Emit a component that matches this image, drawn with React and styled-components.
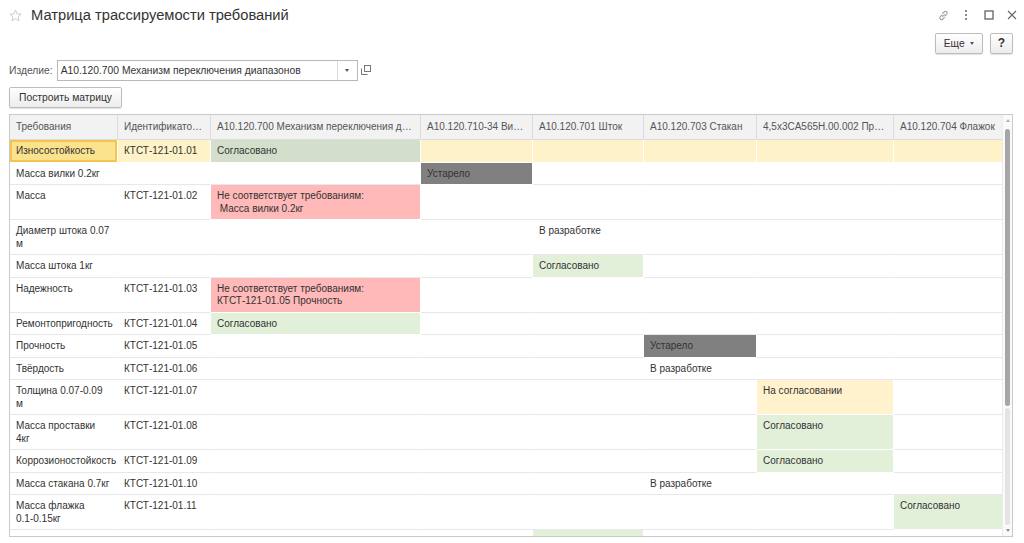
import React from "react";
import styled, { createGlobalStyle } from "styled-components";

const GlobalStyle = createGlobalStyle`
  html, body {
    margin: 0;
    padding: 0;
    background: #fff;
  }
  body {
    font-family: "Liberation Sans", Arial, sans-serif;
    font-size: 10.3px;
    color: #333;
  }
`;

const Page = styled.div`
  width: 1024px;
  height: 543px;
  overflow: hidden;
  box-sizing: border-box;
  padding: 0 11px 0 9px;
  display: flex;
  flex-direction: column;
`;

const TitleBar = styled.div`
  display: flex;
  align-items: center;
  height: 30px;
`;

const Title = styled.h1`
  margin: 0 0 0 9px;
  font-size: 14.7px;
  font-weight: 400;
  color: #333;
  flex: 1;
`;

const WindowIcons = styled.div`
  display: flex;
  align-items: center;
  gap: 9px;
  margin-right: -6px;
`;

const IconBox = styled.span`
  width: 14px;
  height: 14px;
  display: flex;
  align-items: center;
  justify-content: center;
`;

const CommandBar = styled.div`
  display: flex;
  justify-content: flex-end;
  gap: 7px;
  height: 22px;
  align-items: center;
  margin-top: 2px;
`;

const Button = styled.button`
  font-family: inherit;
  font-size: ${(p) => (p.$bold ? "12px" : "10.3px")};
  font-weight: ${(p) => (p.$bold ? 700 : 400)};
  color: #333;
  height: 21px;
  padding: 0 ${(p) => p.$pad || 8}px;
  border: 1px solid #bdbdbd;
  border-radius: 2px;
  background: linear-gradient(#ffffff, #ececec);
  box-shadow: 0 1px 1px rgba(0, 0, 0, 0.12);
  display: flex;
  align-items: center;
  gap: 5px;
  cursor: pointer;
`;

const Caret = styled.span`
  width: 0;
  height: 0;
  border-left: 2.5px solid transparent;
  border-right: 2.5px solid transparent;
  border-top: 3px solid #555;
`;

const FieldRow = styled.div`
  display: flex;
  align-items: center;
  margin-top: 5px;
  height: 22px;
`;

const Label = styled.span`
  color: #555;
  margin-right: 4px;
`;

const Input = styled.div`
  display: flex;
  align-items: stretch;
  width: 299px;
  height: 19px;
  border: 1px solid #b8b8b8;
  background: #fff;
`;

const InputText = styled.div`
  flex: 1;
  padding: 0 3px;
  line-height: 19px;
  color: #333;
  white-space: nowrap;
  overflow: hidden;
`;

const DropPart = styled.div`
  width: 19px;
  border-left: 1px solid #dcdcdc;
  display: flex;
  align-items: center;
  justify-content: center;
`;

const OpenButton = styled.div`
  width: 17px;
  height: 21px;
  display: flex;
  align-items: center;
  justify-content: center;
`;

const ActionRow = styled.div`
  margin-top: 6px;
  height: 22px;
  display: flex;
`;

const Frame = styled.div`
  margin-top: 5px;
  height: 423px;
  box-sizing: border-box;
  border: 1px solid #c9c9c9;
  display: flex;
  overflow: hidden;
`;

const GridArea = styled.div`
  flex: 1;
  overflow: hidden;
`;

const cols = "108px 93px 210px 112px 111px 113px 137px 109px";

const HeaderRow = styled.div`
  display: grid;
  grid-template-columns: ${cols};
  height: 24px;
  background: #f2f2f2;
  border-bottom: 1px solid #dcdcdc;
`;

const HeadCell = styled.div`
  padding: 0 6px;
  line-height: 24px;
  font-size: 10px;
  color: #555;
  white-space: nowrap;
  overflow: hidden;
  text-overflow: ellipsis;
  border-right: 1px solid #dcdcdc;
`;

const Row = styled.div`
  display: grid;
  grid-template-columns: ${cols};
  background: ${(p) => (p.$selected ? "#fdf2c8" : "#fff")};
`;

const bg = {
  ok: "#e2efd9",
  okSel: "#d3dfcb",
  bad: "#ffb9b9",
  old: "#808080",
  wait: "#fff2cc",
};

const Cell = styled.div`
  box-sizing: border-box;
  padding: 5px 6px 4px;
  font-size: 10px;
  line-height: 12.5px;
  overflow: hidden;
  white-space: ${(p) => (p.$nowrap ? "nowrap" : "pre-wrap")};
  color: #333;
  background: ${(p) => (p.$status ? bg[p.$status] : "transparent")};
  border-right: 1px solid ${(p) => (p.$status ? "#fff" : "transparent")};
  border-bottom: 1px solid ${(p) => (p.$status ? "#fff" : "#e8e8e8")};
  ${(p) =>
    p.$current &&
    `
    background: #fbe28d;
    box-shadow: inset 0 0 0 2px #f4c44e;
  `}
  ${(p) => p.$selected && `border-right: 1px solid #fff; border-bottom: 1px solid #fff;`}
`;

const Keep = styled.span`
  white-space: nowrap;
`;

const ScrollTrack = styled.div`
  width: 10px;
  border-left: 1px solid #ececec;
  background: #fafafa;
  display: flex;
  flex-direction: column;
  align-items: center;
  padding: 4px 0;
  box-sizing: border-box;
`;

const ScrollThumb = styled.div`
  width: 5px;
  height: 277px;
  margin-top: 7px;
  border-radius: 3px;
  background: #a6a6a6;
`;

const ScrollRest = styled.div`
  flex: 1;
  width: 5px;
  border-radius: 3px;
  background: #e4e4e4;
  margin: 2px 0 4px;
`;

const Arrow = styled.span`
  width: 0;
  height: 0;
  border-left: 2px solid transparent;
  border-right: 2px solid transparent;
  ${(p) => (p.$up ? "border-bottom: 3px solid #b0b0b0;" : "border-top: 3px solid #909090;")}
`;

const headers = [
  "Требования",
  "Идентификатор требования",
  "A10.120.700 Механизм переключения диапазонов",
  "A10.120.710-34 Вилка",
  "A10.120.701 Шток",
  "A10.120.703 Стакан",
  "4,5x3CA565H.00.002 Проставка",
  "A10.120.704 Флажок",
];

// cells: [column index, text, status]
const rows = [
  { key: "r1", name: "Износостойкость", id: "КТСТ-121-01.01", cells: [[2, "Согласовано", "okSel"]], selected: true },
  { key: "r2", name: "Масса вилки 0.2кг", id: "", cells: [[3, "Устарело", "old"]] },
  { key: "r3", name: "Масса", id: "КТСТ-121-01.02", cells: [[2, "Не соответствует требованиям:\n Масса вилки 0.2кг", "bad"]] },
  { key: "r4", name: "Диаметр штока 0.07 м", id: "", cells: [[4, "В разработке", null]] },
  { key: "r5", name: "Масса штока 1кг", id: "", cells: [[4, "Согласовано", "ok"]] },
  { key: "r6", name: "Надежность", id: "КТСТ-121-01.03", cells: [[2, "Не соответствует требованиям:\nКТСТ-121-01.05 Прочность", "bad"]] },
  { key: "r7", name: "Ремонтопригодность", id: "КТСТ-121-01.04", cells: [[2, "Согласовано", "ok"]] },
  { key: "r8", name: "Прочность", id: "КТСТ-121-01.05", cells: [[5, "Устарело", "old"]] },
  { key: "r9", name: "Твёрдость", id: "КТСТ-121-01.06", cells: [[5, "В разработке", null]] },
  {
    key: "r10",
    name: (
      <>
        Толщина <Keep>0.07-0.09</Keep> м
      </>
    ),
    id: "КТСТ-121-01.07",
    cells: [[6, "На согласовании", "wait"]],
  },
  { key: "r11", name: "Масса проставки 4кг", id: "КТСТ-121-01.08", cells: [[6, "Согласовано", "ok"]] },
  { key: "r12", name: "Коррозионостойкость", id: "КТСТ-121-01.09", cells: [[6, "Согласовано", "ok"]] },
  { key: "r13", name: "Масса стакана 0.7кг", id: "КТСТ-121-01.10", cells: [[5, "В разработке", null]] },
  {
    key: "r14",
    name: (
      <>
        Масса флажка <Keep>0.1-0.15кг</Keep>
      </>
    ),
    id: "КТСТ-121-01.11",
    cells: [[7, "Согласовано", "ok"]],
  },
  { key: "r15", name: "Плотность", id: "КТСТ-121-01.12", cells: [[4, "Согласовано", "ok"]] },
];

const Star = () => (
  <svg width="13" height="13" viewBox="0 0 24 24" fill="none" stroke="#c4c4c4" strokeWidth="1.6" strokeLinejoin="round">
    <polygon points="12,2 15,9 22.5,9.5 16.8,14.3 18.6,21.8 12,17.8 5.4,21.8 7.2,14.3 1.5,9.5 9,9" />
  </svg>
);

const LinkIcon = () => (
  <svg width="13" height="13" viewBox="0 0 16 16" fill="none" stroke="#9a9a9a" strokeWidth="1.3" strokeLinecap="round">
    <path d="M7 9.2 L9.2 7" />
    <path d="M6 7.5 L4 9.5 a2.2 2.2 0 0 0 3.1 3.1 L9 10.6" />
    <path d="M10 8.5 L12 6.5 a2.2 2.2 0 0 0 -3.1 -3.1 L7 5.4" />
  </svg>
);

const Dots = () => (
  <svg width="4" height="12" viewBox="0 0 4 12" fill="#8a8a8a">
    <rect x="1" y="1" width="2" height="2" />
    <rect x="1" y="5" width="2" height="2" />
    <rect x="1" y="9" width="2" height="2" />
  </svg>
);

const Maximize = () => (
  <svg width="10" height="10" viewBox="0 0 10 10" fill="none" stroke="#555" strokeWidth="1.2">
    <rect x="1" y="1" width="8" height="8" />
  </svg>
);

const Close = () => (
  <svg width="10" height="10" viewBox="0 0 10 10" fill="none" stroke="#666" strokeWidth="1.1">
    <path d="M1 1 L9 9 M9 1 L1 9" />
  </svg>
);

const OpenIcon = () => (
  <svg width="10" height="10" viewBox="0 0 10 10" fill="none" stroke="#777" strokeWidth="1">
    <rect x="3.5" y="0.5" width="6" height="6" />
    <path d="M0.5 3.5 V9.5 H6.5" />
  </svg>
);

const Matrix = () => (
  <Frame>
    <GridArea>
      <HeaderRow>
        {headers.map((h) => (
          <HeadCell key={h}>{h}</HeadCell>
        ))}
      </HeaderRow>
      {rows.map((r) => {
        const byCol = {};
        r.cells.forEach(([c, text, status]) => (byCol[c] = { text, status }));
        const all = [];
        for (let c = 0; c < 8; c++) {
          if (c === 0) {
            all.push(
              <Cell key={c} $current={r.selected} $selected={r.selected}>
                {r.name}
              </Cell>
            );
          } else if (c === 1) {
            all.push(
              <Cell key={c} $nowrap $selected={r.selected}>
                {r.id}
              </Cell>
            );
          } else {
            const v = byCol[c];
            all.push(
              <Cell key={c} $status={v && v.status} $selected={r.selected}>
                {v ? v.text : ""}
              </Cell>
            );
          }
        }
        return (
          <Row key={r.key} $selected={r.selected}>
            {all}
          </Row>
        );
      })}
    </GridArea>
    <ScrollTrack>
      <Arrow $up />
      <ScrollThumb />
      <ScrollRest />
      <Arrow />
    </ScrollTrack>
  </Frame>
);

export default function App() {
  return (
    <>
      <GlobalStyle />
      <Page>
        <TitleBar>
          <Star />
          <Title>Матрица трассируемости требований</Title>
          <WindowIcons>
            <IconBox>
              <LinkIcon />
            </IconBox>
            <IconBox>
              <Dots />
            </IconBox>
            <IconBox>
              <Maximize />
            </IconBox>
            <IconBox>
              <Close />
            </IconBox>
          </WindowIcons>
        </TitleBar>
        <CommandBar>
          <Button>
            Еще <Caret />
          </Button>
          <Button $bold $pad={7}>
            ?
          </Button>
        </CommandBar>
        <FieldRow>
          <Label>Изделие:</Label>
          <Input>
            <InputText>A10.120.700 Механизм переключения диапазонов</InputText>
            <DropPart>
              <Caret />
            </DropPart>
          </Input>
          <OpenButton>
            <OpenIcon />
          </OpenButton>
        </FieldRow>
        <ActionRow>
          <Button $pad={9}>Построить матрицу</Button>
        </ActionRow>
        <Matrix />
      </Page>
    </>
  );
}
